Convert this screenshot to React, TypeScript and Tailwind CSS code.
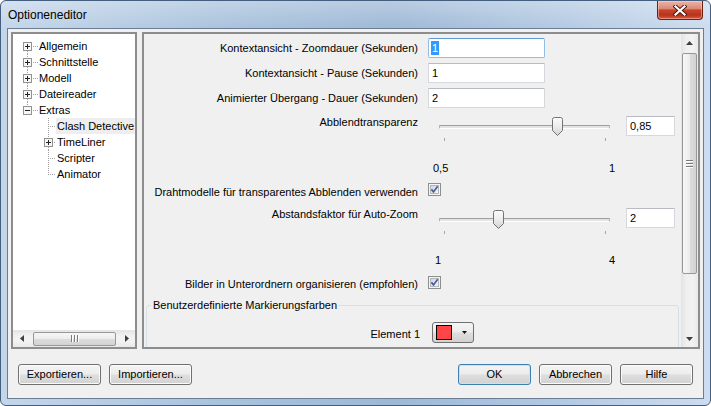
import React from "react";

const font = "font-['Liberation_Sans',Arial,sans-serif]";
const dot = "#a0a0a0";

/* tree connector for a top level node */
function TopGlyph({ open, above, below }: { open?: boolean; above?: boolean; below?: boolean }) {
  return (
    <svg width="26" height="16" viewBox="0 0 26 16" className="shrink-0" shapeRendering="crispEdges">
      {above && <line x1="14.5" y1="0" x2="14.5" y2="4" stroke={dot} strokeDasharray="1 1" />}
      {below && <line x1="14.5" y1="13" x2="14.5" y2="16" stroke={dot} strokeDasharray="1 1" />}
      <line x1="20" y1="8.5" x2="25" y2="8.5" stroke={dot} strokeDasharray="1 1" />
      <rect x="10.5" y="4.5" width="8" height="8" fill="#f6f6f6" stroke="#929292" />
      <line x1="12" y1="8.5" x2="17" y2="8.5" stroke="#222" />
      {!open && <line x1="14.5" y1="6" x2="14.5" y2="11" stroke="#222" />}
    </svg>
  );
}

/* tree connector for a child node */
function ChildGlyph({ last, plus }: { last?: boolean; plus?: boolean }) {
  return (
    <svg width="43" height="16" viewBox="0 0 43 16" className="shrink-0" shapeRendering="crispEdges">
      {plus ? (
        <>
          <line x1="35.5" y1="0" x2="35.5" y2="4" stroke={dot} strokeDasharray="1 1" />
          <line x1="35.5" y1="13" x2="35.5" y2="16" stroke={dot} strokeDasharray="1 1" />
          <line x1="41" y1="8.5" x2="42" y2="8.5" stroke={dot} strokeDasharray="1 1" />
          <rect x="31.5" y="4.5" width="8" height="8" fill="#f6f6f6" stroke="#929292" />
          <line x1="33" y1="8.5" x2="38" y2="8.5" stroke="#222" />
          <line x1="35.5" y1="6" x2="35.5" y2="11" stroke="#222" />
        </>
      ) : (
        <>
          <line x1="35.5" y1="0" x2="35.5" y2={last ? 9 : 16} stroke={dot} strokeDasharray="1 1" />
          <line x1="37" y1="8.5" x2="42" y2="8.5" stroke={dot} strokeDasharray="1 1" />
        </>
      )}
    </svg>
  );
}

function Arrow({ dir }: { dir: "up" | "down" | "left" | "right" }) {
  const pts = {
    up: "0,4 3.5,0 7,4",
    down: "0,0 7,0 3.5,4",
    left: "4,0 4,7 0,3.5",
    right: "0,0 4,3.5 0,7",
  }[dir];
  const v = dir === "up" || dir === "down";
  return (
    <svg width={v ? 7 : 4} height={v ? 4 : 7} viewBox={v ? "0 0 7 4" : "0 0 4 7"}>
      <polygon points={pts} fill="#3f3f3f" />
    </svg>
  );
}

function Checkbox() {
  return (
    <svg width="13" height="13" viewBox="0 0 13 13" className="shrink-0">
      <defs>
        <linearGradient id="cbfill" x1="0" y1="0" x2="1" y2="1">
          <stop offset="0" stopColor="#cfd3d9" />
          <stop offset="1" stopColor="#f7f7f7" />
        </linearGradient>
      </defs>
      <rect x="0.5" y="0.5" width="12" height="12" fill="#f4f4f4" stroke="#8e8f8f" />
      <rect x="2.5" y="2.5" width="8" height="8" fill="url(#cbfill)" stroke="#b4b8bd" />
      <path d="M3.4 6.4 L5.5 8.9 L9.7 3.3" fill="none" stroke="#4b5f99" strokeWidth="1.7" />
    </svg>
  );
}

function Thumb() {
  return (
    <svg width="11" height="19" viewBox="0 0 11 19">
      <defs>
        <linearGradient id="thumbfill" x1="0" y1="0" x2="0" y2="1">
          <stop offset="0" stopColor="#fbfbfb" />
          <stop offset="0.5" stopColor="#ececec" />
          <stop offset="1" stopColor="#d2d2d2" />
        </linearGradient>
      </defs>
      <path
        d="M0.5 2.5 Q0.5 0.5 2.5 0.5 L8.5 0.5 Q10.5 0.5 10.5 2.5 L10.5 13.5 L5.5 18.5 L0.5 13.5 Z"
        fill="url(#thumbfill)"
        stroke="#737373"
      />
    </svg>
  );
}

function Slider({ pct }: { pct: number }) {
  // tick marks sit at 5px and 166px, the thumb centre travels between them
  const left = Math.round(5 + pct * 161 - 5);
  return (
    <div className="w-[171px]">
      <div className="relative flex h-[19px] items-center">
        <div className="h-[4px] w-full rounded-[1px] border border-[#b4b4b4] border-t-[#9f9f9f] border-b-white bg-[#e4e4e4]" />
        <div className="absolute top-0" style={{ left }}>
          <Thumb />
        </div>
      </div>
      <div className="mt-[2px] flex justify-between pl-[5px] pr-[4px]">
        <div className="h-[3px] w-px bg-[#a6a6a6]" />
        <div className="h-[3px] w-px bg-[#a6a6a6]" />
      </div>
    </div>
  );
}

function TextBox({ value, className, focused }: { value: string; className: string; focused?: boolean }) {
  return (
    <div
      className={`flex h-[20px] items-center bg-white ${className} ${
        focused
          ? "rounded-[2px] border border-[#8fbfe8] border-t-[#5e9ad3] pl-[2px]"
          : "rounded-[1px] border border-[#d5d8dd] border-t-[#b8bbc1] pl-[3px]"
      }`}
    >
      {focused ? <span className="bg-[#3399ff] px-px leading-[14px] text-white">{value}</span> : <span>{value}</span>}
    </div>
  );
}

function Btn({ children, w, def }: { children: React.ReactNode; w: string; def?: boolean }) {
  return (
    <div
      className={`flex h-[21px] items-center justify-center whitespace-nowrap rounded-[3px] border bg-[linear-gradient(180deg,#f4f4f4_0%,#ececec_48%,#dedede_52%,#d2d2d2_100%)] ${w} ${
        def ? "border-[#3c7fb1] shadow-[inset_0_0_0_1px_#bfe7fb]" : "border-[#707070] shadow-[inset_0_0_0_1px_#fbfbfb]"
      }`}
    >
      {children}
    </div>
  );
}

const treeTop = [
  { label: "Allgemein", above: false, below: true },
  { label: "Schnittstelle", above: true, below: true },
  { label: "Modell", above: true, below: true },
  { label: "Dateireader", above: true, below: true },
];

export default function App() {
  return (
    <div className={`h-[406px] w-[711px] ${font} text-[11px] text-black`}>
      <div className="flex h-full w-full flex-col overflow-hidden rounded-[6px] border border-[#435e7e] bg-[linear-gradient(180deg,rgba(255,255,255,0.28)_0%,rgba(255,255,255,0)_7%),linear-gradient(90deg,#c4d6ea_0%,#aac3dd_30%,#9db8d6_55%,#b4cae3_80%,#cddcee_100%)]">
        {/* Title bar */}
        <div className="flex h-[27px] shrink-0 items-start justify-between pl-[7px] pr-[7px]">
          <div className="pt-[6px] text-[12px] leading-4">Optioneneditor</div>
          <div className="flex h-[19px] w-[46px] items-center justify-center rounded-b-[4px] border border-t-0 border-[#6a2216] bg-[linear-gradient(180deg,#ecb4a6_0%,#dc8a78_42%,#c8452c_50%,#b9321a_78%,#d85a3f_100%)] shadow-[inset_0_0_0_1px_rgba(255,220,210,0.45)]">
            <svg width="14" height="11" viewBox="0 0 14 11">
              <path d="M2.5 1.5 L11.5 9.5 M11.5 1.5 L2.5 9.5" stroke="#4b150b" strokeWidth="4" strokeLinecap="square" />
              <path d="M2.5 1.5 L11.5 9.5 M11.5 1.5 L2.5 9.5" stroke="#ffffff" strokeWidth="2.2" strokeLinecap="square" />
            </svg>
          </div>
        </div>

        {/* Client area */}
        <div className="mx-[6px] mb-[6px] flex flex-1 flex-col border border-[#6b7d92] bg-[#f0f0f0]">
          <div className="flex h-[320px] shrink-0 gap-[5px] px-[3px] pt-[3px]">
            {/* Tree */}
            <div className="flex h-[317px] w-[126px] flex-col overflow-hidden border-2 border-[#8d8d8d] bg-white">
              <div className="flex flex-col whitespace-nowrap pt-[4px]">
                {treeTop.map((t) => (
                  <div key={t.label} className="flex h-[16px] items-center leading-4">
                    <TopGlyph above={t.above} below={t.below} />
                    <span>{t.label}</span>
                  </div>
                ))}
                <div className="flex h-[16px] items-center leading-4">
                  <TopGlyph open above />
                  <span>Extras</span>
                </div>
                <div className="flex h-[16px] items-center leading-4">
                  <ChildGlyph />
                  <span className="whitespace-nowrap bg-[#eeeeee] px-px">Clash Detective</span>
                </div>
                <div className="flex h-[16px] items-center leading-4">
                  <ChildGlyph plus />
                  <span className="px-px">TimeLiner</span>
                </div>
                <div className="flex h-[16px] items-center leading-4">
                  <ChildGlyph />
                  <span className="px-px">Scripter</span>
                </div>
                <div className="flex h-[16px] items-center leading-4">
                  <ChildGlyph last />
                  <span className="px-px">Animator</span>
                </div>
              </div>
              {/* horizontal scrollbar */}
              <div className="mt-auto flex h-[17px] shrink-0 items-center bg-[linear-gradient(180deg,#e4e4e4_0%,#f1f1f1_35%,#f3f3f3_65%,#e8e8e8_100%)]">
                <div className="flex h-full w-[17px] items-center justify-center">
                  <Arrow dir="left" />
                </div>
                <div className="ml-[3px] flex h-[14px] w-[83px] items-center justify-center gap-[1px] rounded-[2px] border border-[#979797] bg-[linear-gradient(180deg,#f6f6f6_0%,#ececec_50%,#dcdcdc_51%,#d3d3d3_100%)]">
                  <div className="h-[7px] w-[2px] border-l border-[#7a7a7a] bg-white" />
                  <div className="h-[7px] w-[2px] border-l border-[#7a7a7a] bg-white" />
                  <div className="h-[7px] w-[2px] border-l border-[#7a7a7a] bg-white" />
                </div>
                <div className="flex-1" />
                <div className="flex h-full w-[17px] items-center justify-center">
                  <Arrow dir="right" />
                </div>
              </div>
            </div>

            {/* Options panel */}
            <div className="flex h-[317px] flex-1 border-2 border-[#8d8d8d]">
              <div className="flex flex-1 flex-col overflow-hidden">
                <div className="mt-[4px] flex h-[20px] items-center">
                  <div className="w-[274px] whitespace-nowrap text-right leading-4">Kontextansicht - Zoomdauer (Sekunden)</div>
                  <TextBox value="1" focused className="ml-[10px] w-[117px]" />
                </div>
                <div className="mt-[5px] flex h-[20px] items-center">
                  <div className="w-[274px] whitespace-nowrap text-right leading-4">Kontextansicht - Pause (Sekunden)</div>
                  <TextBox value="1" className="ml-[10px] w-[117px]" />
                </div>
                <div className="mt-[5px] flex h-[20px] items-center">
                  <div className="w-[274px] whitespace-nowrap text-right leading-4">Animierter Übergang - Dauer (Sekunden)</div>
                  <TextBox value="2" className="ml-[10px] w-[117px]" />
                </div>

                {/* Abblendtransparenz */}
                <div className="mt-[6px] flex items-start">
                  <div className="w-[274px] whitespace-nowrap text-right leading-4">Abblendtransparenz</div>
                  <div className="ml-[21px] mt-[3px]">
                    <Slider pct={0.7} />
                  </div>
                  <TextBox value="0,85" className="ml-[16px] mt-[2px] w-[49px]" />
                </div>
                <div className="ml-[289px] mt-[19px] flex w-[182px] justify-between leading-4">
                  <span>0,5</span>
                  <span>1</span>
                </div>

                <div className="mt-[7px] flex items-start">
                  <div className="mt-[1px] w-[274px] whitespace-nowrap text-right leading-4">
                    Drahtmodelle für transparentes Abblenden verwenden
                  </div>
                  <div className="ml-[10px]">
                    <Checkbox />
                  </div>
                </div>

                {/* Abstandsfaktor */}
                <div className="mt-[6px] flex items-start">
                  <div className="w-[274px] whitespace-nowrap text-right leading-4">Abstandsfaktor für Auto-Zoom</div>
                  <div className="ml-[21px] mt-[4px]">
                    <Slider pct={1 / 3} />
                  </div>
                  <TextBox value="2" className="ml-[16px] mt-[2px] w-[49px]" />
                </div>
                <div className="ml-[291px] mt-[18px] flex w-[180px] justify-between leading-4">
                  <span>1</span>
                  <span>4</span>
                </div>

                <div className="mt-[8px] flex items-start">
                  <div className="w-[274px] whitespace-nowrap text-right leading-4">
                    Bilder in Unterordnern organisieren (empfohlen)
                  </div>
                  <div className="ml-[10px]">
                    <Checkbox />
                  </div>
                </div>

                {/* group box */}
                <fieldset className="mx-[2px] mt-[5px] shrink-0 rounded-[3px] border border-[#d5dfe5]">
                  <legend className="ml-[4px] px-[2px] leading-4">Benutzerdefinierte Markierungsfarben</legend>
                  <div className="mt-[9px] flex h-[21px] items-start">
                    <div className="w-[273px] pt-[4px] text-right leading-4">Element 1</div>
                    <div className="ml-[12px] flex h-[21px] w-[42px] items-center rounded-[3px] border border-[#707070] bg-[linear-gradient(180deg,#f4f4f4_0%,#ececec_48%,#dedede_52%,#d2d2d2_100%)] pl-[3px]">
                      <div className="h-[15px] w-[16px] border border-black bg-[#ff4545]" />
                      <div className="ml-[10px]">
                        <svg width="5" height="3" viewBox="0 0 5 3">
                          <polygon points="0,0 5,0 2.5,3" fill="#111" />
                        </svg>
                      </div>
                    </div>
                  </div>
                  <div className="h-[40px]" />
                </fieldset>
              </div>

              {/* vertical scrollbar */}
              <div className="flex w-[17px] flex-col bg-[linear-gradient(90deg,#e3e3e3_0%,#efefef_30%,#f2f2f2_70%,#e9e9e9_100%)]">
                <div className="flex h-[17px] items-center justify-center">
                  <Arrow dir="up" />
                </div>
                <div className="mx-px mt-[2px] flex h-[221px] items-center justify-center rounded-[2px] border border-[#979797] bg-[linear-gradient(90deg,#f7f7f7_0%,#ececec_50%,#dcdcdc_51%,#d2d2d2_100%)]">
                  <div className="flex flex-col gap-px">
                    <div className="h-[2px] w-[7px] border-t border-[#7a7a7a] bg-white" />
                    <div className="h-[2px] w-[7px] border-t border-[#7a7a7a] bg-white" />
                    <div className="h-[2px] w-[7px] border-t border-[#7a7a7a] bg-white" />
                  </div>
                </div>
                <div className="flex-1" />
                <div className="flex h-[17px] items-center justify-center">
                  <Arrow dir="down" />
                </div>
              </div>
            </div>
          </div>

          {/* buttons */}
          <div className="mt-[15px] flex h-[21px] items-center px-[10px]">
            <Btn w="w-[83px]">Exportieren...</Btn>
            <div className="ml-[8px]">
              <Btn w="w-[83px]">Importieren...</Btn>
            </div>
            <div className="flex-1" />
            <Btn w="w-[73px]" def>
              OK
            </Btn>
            <div className="ml-[8px]">
              <Btn w="w-[73px]">Abbrechen</Btn>
            </div>
            <div className="ml-[8px]">
              <Btn w="w-[73px]">Hilfe</Btn>
            </div>
          </div>
        </div>
      </div>
    </div>
  );
}
